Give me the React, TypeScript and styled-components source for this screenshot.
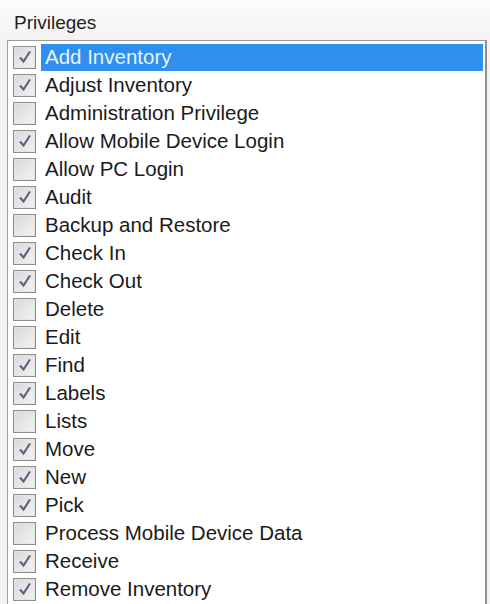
import { createGlobalStyle, styled } from "styled-components"

const privileges: [string, boolean][] = [
  ["Add Inventory", true],
  ["Adjust Inventory", true],
  ["Administration Privilege", false],
  ["Allow Mobile Device Login", true],
  ["Allow PC Login", false],
  ["Audit", true],
  ["Backup and Restore", false],
  ["Check In", true],
  ["Check Out", true],
  ["Delete", false],
  ["Edit", false],
  ["Find", true],
  ["Labels", true],
  ["Lists", false],
  ["Move", true],
  ["New", true],
  ["Pick", true],
  ["Process Mobile Device Data", false],
  ["Receive", true],
  ["Remove Inventory", true],
]

const App = () => {
  return (
    <Container>
      <GlobalStyle />
      <Title>Privileges</Title>
      <ListBox>
        {privileges.map(([name, on], i) => (
          <Row key={name}>
            <Box>
              {on && (
                <svg width="16" height="16" viewBox="0 0 16 16">
                  <path d="M3 8.5 L6.5 12.5 L13 2.5" fill="none" stroke="#5a6580" strokeWidth="2.2" />
                </svg>
              )}
            </Box>
            <Label selected={i === 0}>{name}</Label>
          </Row>
        ))}
      </ListBox>
    </Container>
  )
}

export default App

const GlobalStyle = createGlobalStyle`
body {
  margin: 0;
  background: #f8f8f8;
}
`

const Container = styled.div`
width: 490px;
height: 604px;
overflow: hidden;
font-family: "Liberation Sans", Arial, sans-serif;
background: linear-gradient(#fbfbfb, #f3f3f3 40px);
`

const Title = styled.div`
font-size: 19px;
color: #222;
padding: 12px 0 0 14px;
height: 28px;
box-sizing: border-box;
`

const ListBox = styled.div`
margin-left: 7px;
margin-top: 12px;
width: 480px;
height: 580px;
box-sizing: border-box;
border: 1px solid #9c9c9c;
border-right: 2px solid #8f8f8f;
background: #fff;
padding: 2px 2px 0 0;
`

const Row = styled.div`
height: 28px;
display: flex;
align-items: center;
`

const Box = styled.div`
width: 23px;
height: 23px;
margin: 0 5px 0 5px;
flex-shrink: 0;
box-sizing: border-box;
border: 1px solid #8e8e8e;
background: linear-gradient(135deg, #d8d8d8, #f4f4f4);
box-shadow: inset 0 0 0 1px #e4e4e4;
display: flex;
align-items: center;
justify-content: center;
`

const Label = styled.div<{ selected?: boolean }>`
flex: 1;
height: 27px;
display: flex;
align-items: center;
padding-left: 4px;
font-size: 20.5px;
color: ${(p) => (p.selected ? "#e8f4ff" : "#1a1a1a")};
background: ${(p) => (p.selected ? "#2e8fef" : "transparent")};
`
